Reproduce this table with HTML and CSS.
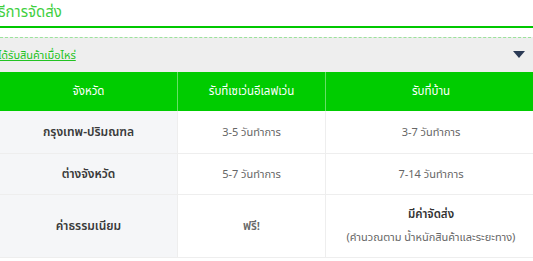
FILE: index.html
```html
<!DOCTYPE html>
<html lang="th">
<head>
<meta charset="utf-8">
<link rel="stylesheet" href="styles.css">
</head>
<body>
<div class="page">
  <div class="title"><span class="title-text">วิธีการจัดส่ง</span></div>
  <div class="accordion">
    <a class="acc-link" href="#">ได้รับสินค้าเมื่อไหร่</a>
    <svg class="caret" width="12" height="8" viewBox="0 0 12 8"><path d="M0 0H12L6 7Z" fill="#2b3a55"/></svg>
  </div>
  <table class="ship">
    <thead>
      <tr><th class="c1">จังหวัด</th><th class="c2">รับที่เซเว่นอีเลฟเว่น</th><th class="c3">รับที่บ้าน</th></tr>
    </thead>
    <tbody>
      <tr class="r1"><td class="c1">กรุงเทพ-ปริมณฑล</td><td>3-5 วันทำการ</td><td>3-7 วันทำการ</td></tr>
      <tr class="r2"><td class="c1">ต่างจังหวัด</td><td>5-7 วันทำการ</td><td>7-14 วันทำการ</td></tr>
      <tr class="r3"><td class="c1">ค่าธรรมเนียม</td><td class="strong">ฟรี!</td><td><div class="strong">มีค่าจัดส่ง</div><div class="note">(คำนวณตาม น้ำหนักสินค้าและระยะทาง)</div></td></tr>
    </tbody>
  </table>
</div>
</body>
</html>
```
FILE: styles.css
```css
html, body {
  margin: 0;
  padding: 0;
  background: #fff;
  overflow: hidden;
}
body {
  font-family: "Noto Sans Thai", "Noto Sans", "DejaVu Sans", sans-serif;
}
.page {
  width: 536px;
}
.title {
  height: 26px;
  border-bottom: 2px solid #00c800;
  overflow: hidden;
  white-space: nowrap;
}
.title-text {
  display: inline-block;
  margin-left: -10px;
  font-size: 15px;
  line-height: 22px;
  color: #3fcf3f;
}
.accordion {
  margin-top: 9px;
  border-top: 1px dashed #9be39b;
  background: #eeeeee;
  height: 34px;
  display: flex;
  align-items: center;
  justify-content: space-between;
  padding-right: 11px;
  overflow: hidden;
}
.acc-link {
  margin-left: -2px;
  font-size: 11px;
  color: #22c322;
  text-decoration: underline;
  text-decoration-thickness: 1px;
  white-space: nowrap;
}
.caret {
  display: block;
}
.ship {
  width: 536px;
  border-collapse: collapse;
  table-layout: fixed;
  font-size: 11px;
  text-align: center;
}
.ship th {
  background: #00cc00;
  color: #fff;
  font-size: 11.5px;
  font-weight: normal;
  height: 39px;
  padding: 0;
  border-left: 1px solid #66e066;
}
.ship th.c1 { border-left: none; }
.c1 { width: 177px; }
.c2 { width: 147px; }
.ship td {
  color: #666;
  padding: 0;
  border-left: 1px solid #eeeeee;
  border-bottom: 1px solid #eeeeee;
}
.ship td.c1 {
  border-left: none;
  background: #f5f6f8;
  color: #3a3a3a;
  font-size: 12px;
  font-weight: 600;
}
.r1 td { height: 42px; }
.r2 td { height: 40px; }
.r3 td { height: 62px; }
.strong {
  color: #333;
  font-weight: 600;
  font-size: 11.5px;
}
.note {
  margin-top: 6px;
  color: #666;
  font-size: 11px;
}
```
